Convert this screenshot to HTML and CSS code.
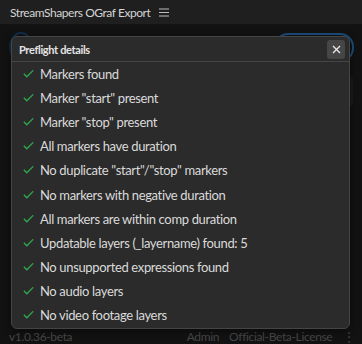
FILE: index.html
```html
<!DOCTYPE html>
<html lang="en">
<head>
    <meta charset="UTF-8">
    <meta name="viewport" content="width=device-width, initial-scale=1.0">
    <title>StreamShapers OGraf Export</title>
    <link rel="stylesheet" href="styles.css">
</head>
<body>
    <div id="app">
        <div id="topbar">
            <span class="app-title">StreamShapers OGraf Export</span>
            <span class="menu-icon">
                <svg width="10" height="9" viewBox="0 0 10 9"><path d="M0 1h10M0 4.5h10M0 8h10" stroke="#bdbdbd" stroke-width="1"/></svg>
            </span>
        </div>
        <div id="content">
            <div class="toolbar">
                <div class="ring"></div>
                <div class="pill"></div>
            </div>
            <div class="card-behind"></div>
        </div>
        <div id="footer">
            <span class="version">v1.0.36-beta</span>
            <span class="footer-right">
                <span>Admin</span>
                <span>Official-Beta-License</span>
                <span class="dots">&#8942;</span>
            </span>
        </div>

        <div id="dialog">
            <div class="dialog-header">
                <span class="dialog-title">Preflight details</span>
                <button class="close-btn">
                    <svg width="9" height="9" viewBox="0 0 9 9"><path d="M1 1l7 7M8 1l-7 7" stroke="#e6e6e6" stroke-width="1.4"/></svg>
                </button>
            </div>
            <ul class="checks">
                <li>Markers found</li>
                <li>Marker "start" present</li>
                <li>Marker "stop" present</li>
                <li>All markers have duration</li>
                <li>No duplicate "start"/"stop" markers</li>
                <li>No markers with negative duration</li>
                <li>All markers are within comp duration</li>
                <li>Updatable layers (_layername) found: 5</li>
                <li>No unsupported expressions found</li>
                <li>No audio layers</li>
                <li>No video footage layers</li>
            </ul>
        </div>
    </div>

    <script>
        const check = '<svg class="tick" width="11" height="8" viewBox="0 0 11 8"><path d="M0.8 3.8l3 3l6.4-6.4" fill="none" stroke="#2fa84f" stroke-width="1.3"/></svg>';
        document.querySelectorAll('.checks li').forEach(item => {
            item.innerHTML = check + '<span>' + item.textContent + '</span>';
        });
    </script>
</body>
</html>
```

FILE: styles.css
```css
body {
    margin: 0;
    background-color: #121212;
    font-family: Lato, "Noto Sans", sans-serif;
    color: #dcdcdc;
}
#app {
    position: relative;
    width: 362px;
    height: 344px;
    overflow: hidden;
    display: flex;
    flex-direction: column;
}
#topbar {
    height: 24px;
    background-color: #1f1f1f;
    display: flex;
    align-items: center;
    gap: 9px;
    padding-left: 10px;
    font-size: 12px;
    letter-spacing: -0.45px;
    color: #d4d4d4;
}
.menu-icon {
    display: flex;
    align-items: center;
}
#content {
    flex: 1;
    padding: 8px 9px 0 9px;
}
.toolbar {
    display: flex;
    justify-content: space-between;
    align-items: center;
}
.ring {
    width: 20px;
    height: 26px;
    border: 2px solid #142f4a;
    border-radius: 50%;
}
.pill {
    width: 76px;
    height: 25px;
    border: 2px solid #1c4f7c;
    border-radius: 14px;
    margin-right: -1px;
}
.card-behind {
    margin-top: 14px;
    margin-left: auto;
    width: 10px;
    height: 30px;
    background-color: #1b1b1b;
    border-radius: 4px;
}
#footer {
    height: 20px;
    display: flex;
    justify-content: space-between;
    align-items: flex-end;
    padding: 0 7px 0 9px;
    font-size: 12px;
    letter-spacing: -0.35px;
    color: #474747;
}
.footer-right {
    display: flex;
    gap: 10px;
}
.dots {
    margin-left: 1px;
}
#dialog {
    position: absolute;
    left: 11px;
    top: 36px;
    width: 337px;
    height: 291px;
    background-color: #2b2b2b;
    border: 1px solid #454545;
    border-radius: 6px;
    box-shadow: 0 2px 8px rgba(0, 0, 0, 0.5);
}
.dialog-header {
    height: 24px;
    border-bottom: 1px solid #454545;
    display: flex;
    justify-content: space-between;
    align-items: center;
    padding: 0 4px 0 7px;
}
.dialog-title {
    font-size: 11px;
    font-weight: bold;
    letter-spacing: -0.35px;
    color: #e4e4e4;
}
.close-btn {
    width: 18px;
    height: 19px;
    border: none;
    border-radius: 3px;
    background-color: #464646;
    padding: 0;
    display: flex;
    justify-content: center;
    align-items: center;
}
.checks {
    list-style: none;
    margin: 0;
    padding: 0 0 0 11px;
}
.checks li {
    height: 24.1px;
    display: flex;
    align-items: center;
    gap: 6px;
    font-size: 13px;
    letter-spacing: -0.35px;
    color: #dadada;
}
.tick {
    flex-shrink: 0;
}
```
